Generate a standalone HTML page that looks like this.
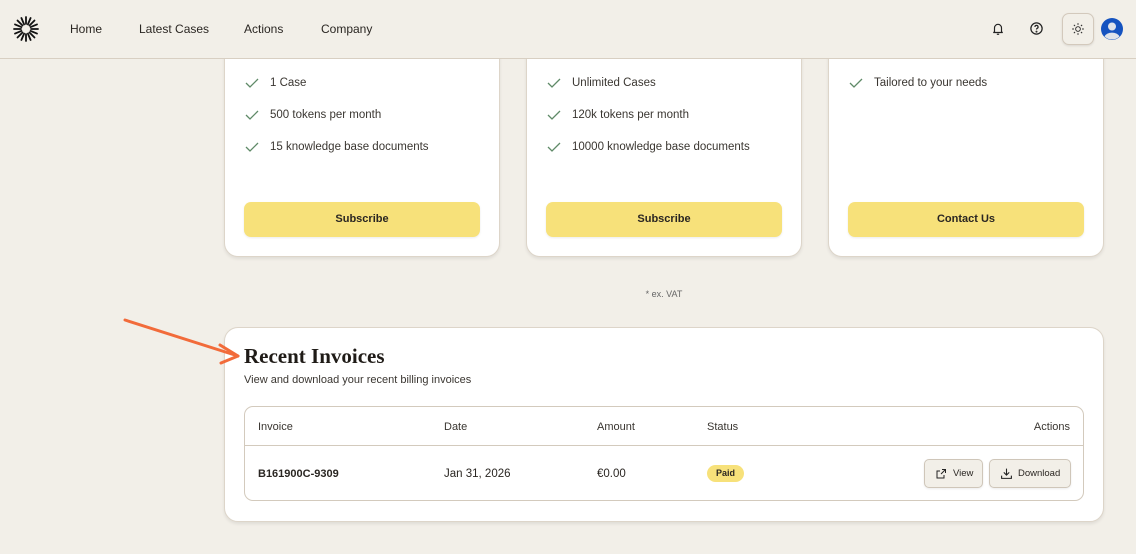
<!DOCTYPE html>
<html><head><meta charset="utf-8"><style>
*{box-sizing:border-box;margin:0;padding:0}
body{width:1136px;height:554px;overflow:hidden;background:#f2efe8;font-family:"Liberation Sans",sans-serif;color:#2a2622;position:relative}
.hdr{position:absolute;left:0;top:0;width:1136px;height:59px;border-bottom:1px solid #d8cfc2;background:#f2efe8;z-index:2}
.nav{position:absolute;top:22px;font-size:12px;color:#2a2622}
.card{position:absolute;background:#fff;border:1px solid #ddd5c9;border-radius:14px;box-shadow:0 2px 3px rgba(0,0,0,.08)}
.feat{position:absolute;left:20px;font-size:11.5px;color:#3a3631}
.feat svg{position:absolute;left:0;top:0}
.feat span{position:absolute;left:25px;white-space:nowrap}
.btn{position:absolute;left:19px;width:236px;height:35px;background:#f7e17a;border-radius:7px;font-size:11px;font-weight:bold;color:#2a2622;text-align:center;line-height:35px;box-shadow:0 1px 2px rgba(0,0,0,.08)}
.th{position:absolute;top:14px;font-size:11px;color:#3a3631}
.td{position:absolute;top:61px;font-size:11.5px;color:#2a2622}
.ab{position:absolute;top:52px;height:29px;background:#f2efe8;border:1px solid #cfc6b9;border-radius:5px;font-size:9.5px;line-height:27px;box-shadow:0 1px 2px rgba(0,0,0,.08)}
</style></head><body>
<div class="hdr">
<svg style="position:absolute;left:13px;top:16px" width="26" height="26" viewBox="-13 -13 26 26"><g stroke="#111" stroke-width="1.8" stroke-linecap="round">
<line x1="0" y1="-5" x2="0" y2="-12"/><line x1="0" y1="5" x2="0" y2="12"/><line x1="-5" y1="0" x2="-12" y2="0"/><line x1="5" y1="0" x2="12" y2="0"/>
<line x1="3.5" y1="-3.5" x2="8.5" y2="-8.5"/><line x1="-3.5" y1="3.5" x2="-8.5" y2="8.5"/><line x1="-3.5" y1="-3.5" x2="-8.5" y2="-8.5"/><line x1="3.5" y1="3.5" x2="8.5" y2="8.5"/>
<line x1="1.9" y1="-4.6" x2="4.6" y2="-11"/><line x1="-1.9" y1="4.6" x2="-4.6" y2="11"/><line x1="-1.9" y1="-4.6" x2="-4.6" y2="-11"/><line x1="1.9" y1="4.6" x2="4.6" y2="11"/>
<line x1="4.6" y1="-1.9" x2="11" y2="-4.6"/><line x1="-4.6" y1="1.9" x2="-11" y2="4.6"/><line x1="-4.6" y1="-1.9" x2="-11" y2="-4.6"/><line x1="4.6" y1="1.9" x2="11" y2="4.6"/></g></svg>
<div class="nav" style="left:70px">Home</div>
<div class="nav" style="left:139px">Latest Cases</div>
<div class="nav" style="left:244px">Actions</div>
<div class="nav" style="left:321px">Company</div>
<svg style="position:absolute;left:991px;top:22px" width="14" height="14" viewBox="0 0 24 24" fill="none" stroke="#222" stroke-width="2"><path d="M6 17V10a6 6 0 0 1 12 0v7l2 1H4z"/><path d="M10 21h4"/></svg>
<svg style="position:absolute;left:1029px;top:21px" width="15" height="15" viewBox="0 0 24 24" fill="none" stroke="#222" stroke-width="2"><circle cx="12" cy="12" r="9"/><path d="M9.5 9.5a2.5 2.5 0 1 1 3.5 2.3c-.7.4-1 .9-1 1.7"/><circle cx="12" cy="17" r=".6" fill="#222"/></svg>
<div style="position:absolute;left:1062px;top:13px;width:32px;height:32px;border:1px solid #d3c9bc;border-radius:7px;background:#f2efe8;box-shadow:0 1px 2px rgba(0,0,0,.1)"></div>
<svg style="position:absolute;left:1071px;top:22px" width="14" height="14" viewBox="0 0 24 24" fill="none" stroke="#222" stroke-width="1.6"><circle cx="12" cy="12" r="4"/><path d="M12 2v3M12 19v3M2 12h3M19 12h3M4.9 4.9l2.1 2.1M17 17l2.1 2.1M4.9 19.1L7 17M17 7l2.1-2.1"/></svg>
<svg style="position:absolute;left:1101px;top:18px" width="22" height="22" viewBox="0 0 22 22"><circle cx="11" cy="11" r="11" fill="#1553c0"/><circle cx="11" cy="8.5" r="4" fill="#dfe3ea"/><path d="M3.5 18.5a8 6 0 0 1 15 0A11 11 0 0 1 3.5 18.5z" fill="#dfe3ea"/></svg>
</div>

<div class="card" style="left:224px;top:30px;width:276px;height:227px">
<div class="feat" style="top:46px"><svg width="14" height="12" viewBox="0 0 14 12"><path d="M1 6l4 4 8-8" fill="none" stroke="#5f8a68" stroke-width="1.3"/></svg><span>1 Case</span></div>
<div class="feat" style="top:78px"><svg width="14" height="12" viewBox="0 0 14 12"><path d="M1 6l4 4 8-8" fill="none" stroke="#5f8a68" stroke-width="1.3"/></svg><span>500 tokens per month</span></div>
<div class="feat" style="top:110px"><svg width="14" height="12" viewBox="0 0 14 12"><path d="M1 6l4 4 8-8" fill="none" stroke="#5f8a68" stroke-width="1.3"/></svg><span>15 knowledge base documents</span></div>
<div class="btn" style="top:171px">Subscribe</div>
</div>
<div class="card" style="left:526px;top:30px;width:276px;height:227px">
<div class="feat" style="top:46px"><svg width="14" height="12" viewBox="0 0 14 12"><path d="M1 6l4 4 8-8" fill="none" stroke="#5f8a68" stroke-width="1.3"/></svg><span>Unlimited Cases</span></div>
<div class="feat" style="top:78px"><svg width="14" height="12" viewBox="0 0 14 12"><path d="M1 6l4 4 8-8" fill="none" stroke="#5f8a68" stroke-width="1.3"/></svg><span>120k tokens per month</span></div>
<div class="feat" style="top:110px"><svg width="14" height="12" viewBox="0 0 14 12"><path d="M1 6l4 4 8-8" fill="none" stroke="#5f8a68" stroke-width="1.3"/></svg><span>10000 knowledge base documents</span></div>
<div class="btn" style="top:171px">Subscribe</div>
</div>
<div class="card" style="left:828px;top:30px;width:276px;height:227px">
<div class="feat" style="top:46px"><svg width="14" height="12" viewBox="0 0 14 12"><path d="M1 6l4 4 8-8" fill="none" stroke="#5f8a68" stroke-width="1.3"/></svg><span>Tailored to your needs</span></div>
<div class="btn" style="top:171px">Contact Us</div>
</div>

<div style="position:absolute;left:0;width:1328px;top:289px;text-align:center;font-size:9px;color:#666">* ex. VAT</div>

<div class="card" style="left:224px;top:327px;width:880px;height:195px">
<div style="position:absolute;left:19px;top:16px;font-family:'Liberation Serif',serif;font-weight:bold;font-size:21px;color:#1f1b17">Recent Invoices</div>
<div style="position:absolute;left:19px;top:46px;font-size:11px;color:#3a3631">View and download your recent billing invoices</div>
<div style="position:absolute;left:19px;top:78px;width:840px;height:95px;border:1px solid #d3cabd;border-radius:9px">
<div style="position:absolute;left:0;top:38px;width:838px;border-top:1px solid #d3cabd"></div>
<div class="th" style="left:13px">Invoice</div>
<div class="th" style="left:199px">Date</div>
<div class="th" style="left:352px">Amount</div>
<div class="th" style="left:462px">Status</div>
<div class="th" style="right:13px">Actions</div>
<div class="td" style="left:13px;font-weight:bold;font-size:11px">B161900C-9309</div>
<div class="td" style="left:199px">Jan 31, 2026</div>
<div class="td" style="left:352px">€0.00</div>
<div style="position:absolute;left:462px;top:58px;width:37px;height:17px;background:#f7e17a;border-radius:9px;font-size:9px;font-weight:bold;text-align:center;line-height:17px">Paid</div>
<div class="ab" style="left:679px;width:59px"><svg style="position:absolute;left:10px;top:8px" width="12" height="12" viewBox="0 0 24 24" fill="none" stroke="#222" stroke-width="2"><path d="M14 3h7v7M21 3l-9 9M18 14v6H4V6h6"/></svg><span style="position:absolute;left:28px">View</span></div>
<div class="ab" style="left:744px;width:82px"><svg style="position:absolute;left:10px;top:7px" width="13" height="13" viewBox="0 0 24 24" fill="none" stroke="#222" stroke-width="2"><path d="M12 3v12M7 10l5 5 5-5M3 16v5h18v-5"/></svg><span style="position:absolute;left:28px">Download</span></div>
</div>
</div>

<svg style="position:absolute;left:120px;top:315px" width="125" height="50" viewBox="0 0 125 50"><g stroke="#f26b3a" stroke-width="3" fill="none" stroke-linecap="round" stroke-linejoin="round"><path d="M5 5L118 41"/><path d="M100 30L118 41L101 48"/></g></svg>
</body></html>
